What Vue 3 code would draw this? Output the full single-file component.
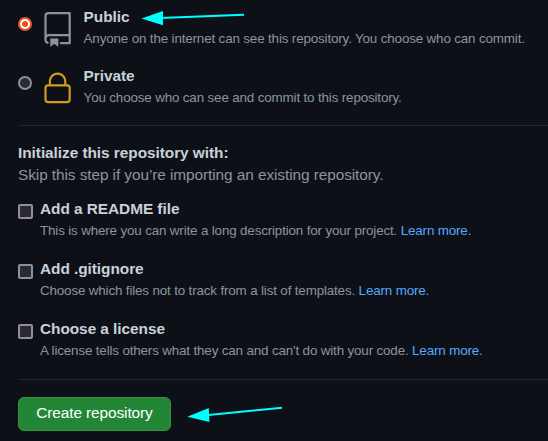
<script setup>
const visibilities = [
  { id: 'public', title: 'Public', text: 'Anyone on the internet can see this repository. You choose who can commit.', checked: true },
  { id: 'private', title: 'Private', text: 'You choose who can see and commit to this repository.', checked: false },
]
const extras = [
  { title: 'Add a README file', text: 'This is where you can write a long description for your project.' },
  { title: 'Add .gitignore', text: 'Choose which files not to track from a list of templates.' },
  { title: 'Choose a license', text: "A license tells others what they can and can't do with your code." },
]
</script>

<template>
  <main class="page">
    <section class="visibility">
      <label v-for="v in visibilities" :key="v.id" class="option">
        <span class="radio" :class="{ checked: v.checked }"></span>
        <svg v-if="v.id === 'public'" class="icon repo" viewBox="0 0 24 24">
          <path fill-rule="evenodd" d="M3 2.75A2.75 2.75 0 015.75 0h14.5a.75.75 0 01.75.75v20.5a.75.75 0 01-.75.75h-6a.75.75 0 010-1.5h5.25v-4H6A1.5 1.5 0 004.5 18v.75c0 .716.43 1.334 1.05 1.605a.75.75 0 01-.6 1.374A3.25 3.25 0 013 18.75v-16zM19.5 1.5V15H6c-.546 0-1.059.146-1.5.401V2.75c0-.69.56-1.25 1.25-1.25H19.5z" />
          <path d="M7 18.25a.25.25 0 01.25-.25h5a.25.25 0 01.25.25v5.01a.25.25 0 01-.397.201l-2.206-1.604a.25.25 0 00-.294 0L7.397 23.46a.25.25 0 01-.397-.2v-5.01z" />
        </svg>
        <svg v-else class="icon lock" viewBox="0 0 24 24">
          <path fill-rule="evenodd" d="M6 9V7.25C6 3.845 8.503 1 12 1s6 2.845 6 6.25V9h.5a2.5 2.5 0 012.5 2.5v8a2.5 2.5 0 01-2.5 2.5h-13A2.5 2.5 0 013 19.5v-8A2.5 2.5 0 015.5 9H6zm1.5-1.75C7.5 4.58 9.422 2.5 12 2.5c2.578 0 4.5 2.08 4.5 4.75V9h-9V7.25zm-3 4.25a1 1 0 011-1h13a1 1 0 011 1v8a1 1 0 01-1 1h-13a1 1 0 01-1-1v-8z" />
        </svg>
        <span class="copy">
          <strong class="title">{{ v.title }}</strong>
          <span class="note">{{ v.text }}</span>
        </span>
      </label>
    </section>

    <section class="init">
      <h2 class="title">Initialize this repository with:</h2>
      <p class="lead">Skip this step if you’re importing an existing repository.</p>
      <label v-for="e in extras" :key="e.title" class="extra">
        <span class="checkbox"></span>
        <span class="copy">
          <strong class="title">{{ e.title }}</strong>
          <span class="note">{{ e.text }} <a class="link">Learn more.</a></span>
        </span>
      </label>
    </section>

    <footer class="actions">
      <button class="create" type="button">Create repository</button>
    </footer>

    <svg class="arrows" viewBox="0 0 548 441">
      <path class="shaft" d="M160 18L244 14.8M206 415.3L282 407.8" />
      <path class="head" d="M141.5 18.6L163 11V25.2ZM187.3 416.8L208.8 408L209.4 422Z" />
    </svg>
  </main>
</template>

<style>
body {
  margin: 0;
  background: #0d1117;
}
</style>

<style scoped>
.page {
  position: relative;
  box-sizing: border-box;
  width: 548px;
  height: 441px;
  padding: 5px 0 0 18px;
  overflow: hidden;
  background: #0d1117;
  color: #c9d1d9;
  font-family: "Liberation Sans", Arial, sans-serif;
}
.visibility {
  height: 120px;
  border-bottom: 1px solid #21262d;
}
.option {
  display: flex;
  height: 59px;
}
.radio {
  box-sizing: border-box;
  flex: none;
  width: 14px;
  height: 14px;
  margin-top: 12px;
  border: 2px solid #8f8f9d;
  border-radius: 50%;
  background: #2b2a33;
}
.radio.checked {
  border-color: #e95420;
  background: radial-gradient(circle, #e95420 2.7px, #fff 3.3px);
}
.icon {
  flex: none;
  width: 35.2px;
  height: 35.2px;
  margin: 7px 8.8px 0 7.6px;
  fill: #8b949e;
}
.lock {
  fill: #d29922;
}
.copy {
  display: flex;
  flex-direction: column;
  white-space: nowrap;
}
.title {
  margin: 0;
  font-size: 15.4px;
  font-weight: 700;
  line-height: 23px;
  letter-spacing: -0.05px;
}
.note {
  color: #8b949e;
  font-size: 13.4px;
  line-height: 20px;
  letter-spacing: -0.15px;
}
.option .note {
  margin-top: 1px;
}
.init {
  height: 238px;
  padding-top: 15px;
  border-bottom: 1px solid #21262d;
}
.lead {
  margin: 0 0 14px;
  color: #8b949e;
  font-size: 15.4px;
  line-height: 22px;
  letter-spacing: -0.08px;
}
.extra {
  display: flex;
  gap: 7px;
  height: 60px;
}
.extra .copy {
  margin-top: -3px;
}
.extra .note {
  margin-top: 1px;
  letter-spacing: -0.153px;
}
.checkbox {
  box-sizing: border-box;
  flex: none;
  width: 15px;
  height: 15px;
  margin-top: 4px;
  border: 2px solid #8f8f9d;
  border-radius: 2px;
  background: #2b2a33;
}
.link {
  color: #58a6ff;
}
.actions {
  padding-top: 17px;
}
.create {
  box-sizing: border-box;
  width: 153px;
  height: 34px;
  padding: 0 0 2px;
  border: 1px solid #389147;
  border-radius: 6px;
  background: #238636;
  color: #fff;
  font-family: inherit;
  font-size: 15.4px;
  letter-spacing: -0.1px;
}
.arrows {
  position: absolute;
  inset: 0;
  pointer-events: none;
}
.shaft {
  fill: none;
  stroke: #00ffff;
  stroke-width: 2;
}
.head {
  fill: #00ffff;
}
</style>
